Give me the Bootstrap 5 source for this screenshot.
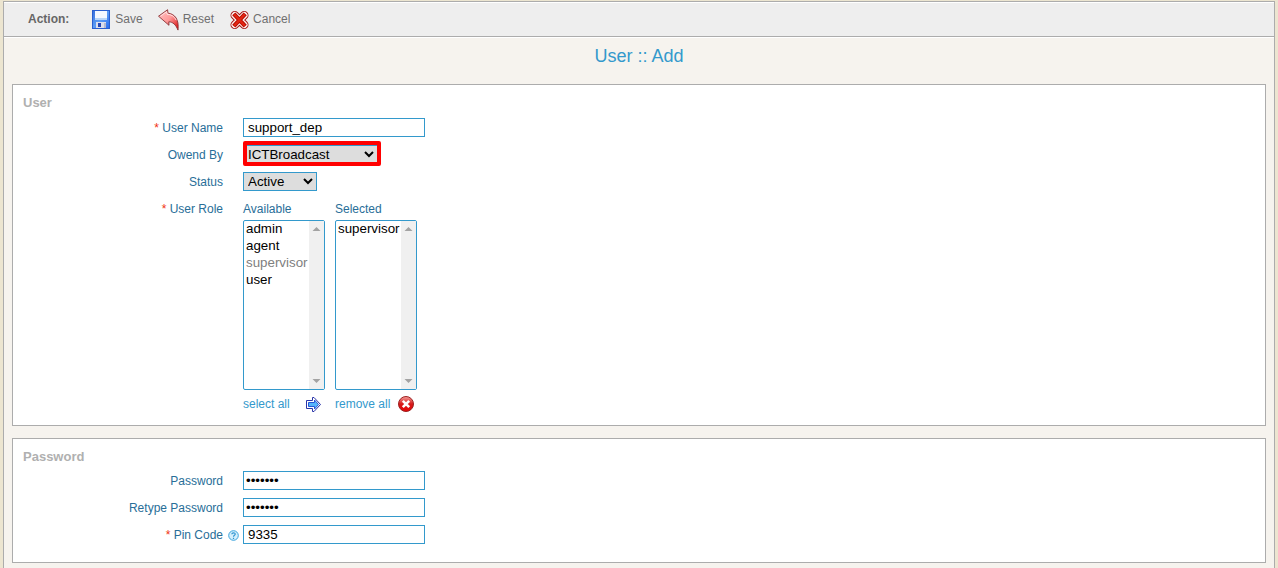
<!DOCTYPE html>
<html lang="en">
<head>
<meta charset="utf-8">
<meta name="viewport" content="width=device-width, initial-scale=1">
<title>User :: Add</title>
<link href="https://cdn.jsdelivr.net/npm/bootstrap@5.3.0/dist/css/bootstrap.min.css" rel="stylesheet">
<style>
body { font-family: "Liberation Sans", Arial, sans-serif; font-size: 12px; line-height: 15px; background: #ece5d0; color: #666; }
.page-frame { margin: 1px 3px 0; background: #f6f3ee; border: 1px solid #acacac; border-bottom: 0; min-height: calc(100vh - 1px); }
.toolbar { height: 35px; padding-left: 24px; gap: 16px; background: #eee; border-top: 1px solid #fff; border-bottom: 1px solid #acacac; }
.toolbar strong { color: #666; margin-right: 7px; }
.tool { border: 0; padding: 0; gap: 4px; background: none; color: #707070; }
.page-title { font-size: 18px; line-height: 36px; font-weight: 400; color: #3399cc; border-top: 1px solid #fff; margin: 0 0 10px; }
.panel { background: #fff; border: 1px solid #acacac; margin: 0 8px 12px; padding: 10px 0 7px; }
.panel h2 { font-size: 13px; line-height: 16px; font-weight: 700; color: #b0b0b0; margin: 0 10px 7px; }
.panel.credentials { padding-bottom: 10px; }
.credentials h2 { margin-bottom: 6px; }
.line { min-height: 19px; margin-bottom: 8px; }
.caption { width: 210px; text-align: right; color: #286e98; line-height: 19px; padding-top: 1px; margin-bottom: -1px; }
.caption b { color: #f03010; font-weight: 400; }
.hint { width: 20px; padding: 2px 0 0 5px; }
.hint svg { display: block; }
.field { font-size: revert; line-height: 15px; height: 19px; width: 182px; padding: 1px 4px; border: 1px solid #3399cc; border-radius: 0; background: #fff; color: #000; }
.field:focus { outline: 0; }
.secret { padding-left: 2px; }
.picker { padding: 0; background: #ddd; }
.owner { width: 135px; }
.status { width: 74px; }
.marked { position: relative; }
.marked::after { content: ""; position: absolute; inset: -4px -3px -2px 0; border: 4px solid #f00; border-radius: 2px; pointer-events: none; }
.role { width: 82px; margin-right: 10px; }
.role label { color: #286e98; line-height: 19px; padding-top: 1px; margin-bottom: 1px; }
.roles { font-size: revert; line-height: 16px; display: block; width: 82px; height: 170px; padding: 0; border: 1px solid #3399cc; border-radius: 2px; overflow-y: scroll; scrollbar-width: none; background: #fff; color: #000; }
.roles::-webkit-scrollbar { display: none; }
.roles option { padding: 0 2px 1px; min-height: 17px; }
.list-frame { position: relative; }
.list-bar { position: absolute; top: 1px; right: 1px; bottom: 1px; width: 15px; background: #f0f0f0; pointer-events: none; }
.role a { color: #3399cc; text-decoration: none; }
.role-foot { height: 28px; }
</style>
</head>
<body>
<main class="page-frame">
  <div class="toolbar d-flex align-items-center">
    <strong>Action:</strong>
    <button type="button" class="tool d-flex align-items-center">
      <svg width="19" height="19" viewBox="0 0 19 19">
        <defs><linearGradient id="disk" x2="1" y2="1"><stop stop-color="#3a72dd"/><stop offset=".5" stop-color="#5b9cf5"/><stop offset="1" stop-color="#2a6cf0"/></linearGradient></defs>
        <path d="M0 0h18v19H0z" fill="#2a5fd0"/><path d="M1 1h16v17H1z" fill="url(#disk)"/>
        <path d="M3 1h12v8H3z" fill="#f4f8ff"/><path d="M3 8h12v2H3z" fill="#b8d5f8"/>
        <path d="M4 12h10v6H4z" fill="#dcdeec"/><path d="M6 13h3v4H6z" fill="#2646b5"/><path d="M12 13h2v5h-2z" fill="#b4b8d0"/>
      </svg>Save
    </button>
    <button type="button" class="tool d-flex align-items-center">
      <svg width="20" height="22" viewBox="0 0 20 22" overflow="visible">
        <defs><linearGradient id="back" x2="1" y2="1"><stop stop-color="#ffc8c8"/><stop offset=".5" stop-color="#f99"/><stop offset="1" stop-color="#d40000"/></linearGradient></defs>
        <path d="M-.5 7.200 8.600.7l.3 3.400c7 .8 11.400 6.500 10.100 17-2.300-5.500-5-8.100-9.200-8.300l.2 3.500z" fill="url(#back)" stroke="#8b3236" stroke-width=".9"/>
        <path d="M1.500 7.200 7.600 2.700l.4 2.500c4.500.3 7.500 2.300 9.200 6" fill="none" stroke="#ffe1e1"/>
      </svg>Reset
    </button>
    <button type="button" class="tool d-flex align-items-center">
      <svg width="19" height="20" viewBox="0 0 20 20">
        <path d="M5 5 15 15M15 5 5 15" stroke="#a51414" stroke-width="9" stroke-linecap="round"/>
        <path d="M5 5 15 15M15 5 5 15" stroke="#fff0ed" stroke-width="7" stroke-linecap="round"/>
        <path d="M4 3.500 16 16.500M16 3.500 4 16.500" stroke="#b20b00" stroke-width="4.500"/>
        <path d="M4.500 4 15.500 16M15.500 4 4.500 16" stroke="#e32412" stroke-width="2.500"/>
      </svg>Cancel
    </button>
  </div>
  <h1 class="page-title text-center">User :: Add</h1>
  <form>
    <section class="panel">
      <h2>User</h2>
      <div class="line d-flex"><label class="caption" for="name"><b>*</b> User Name</label><span class="hint"></span><input class="field" id="name" type="text" value="support_dep"></div>
      <div class="line d-flex"><label class="caption" for="owner">Owend By</label><span class="hint"></span><span class="marked d-flex"><select class="field picker owner" id="owner"><option>ICTBroadcast</option></select></span></div>
      <div class="line d-flex"><label class="caption" for="status">Status</label><span class="hint"></span><select class="field picker status" id="status"><option>Active</option></select></div>
      <div class="d-flex"><span class="caption"><b>*</b> User Role</span><span class="hint"></span>
        <div class="role"><label class="d-block" for="available">Available</label>
          <div class="list-frame">
            <select class="roles" id="available" multiple><option>admin</option><option>agent</option><option disabled>supervisor</option><option>user</option></select>
            <span class="list-bar d-flex flex-column justify-content-between"><svg width="15" height="15"><path d="M3.500 10h8l-4-4z" fill="#a3a3a3"/></svg><svg width="15" height="15"><path d="M3.500 5h8l-4 4z" fill="#a3a3a3"/></svg></span>
          </div>
          <div class="role-foot d-flex align-items-center justify-content-between pe-1"><a href="#">select all</a>
            <a href="#" aria-label="Add"><svg class="d-block" width="15" height="15" viewBox="0 0 15 15"><path d="M.5 3.500h6V.5H8l6.500 7-6.500 7H6.500v-3h-6z" fill="#fff" stroke="#2a35a8"/><path d="M2.500 5.500h6v-2.500l4 4.500-4 4.500V9.500h-6z" fill="#55b4fb" stroke="#2456d6"/></svg></a>
          </div>
        </div>
        <div class="role"><label class="d-block" for="selected">Selected</label>
          <div class="list-frame">
            <select class="roles" id="selected" multiple><option>supervisor</option></select>
            <span class="list-bar d-flex flex-column justify-content-between"><svg width="15" height="15"><path d="M3.500 10h8l-4-4z" fill="#a3a3a3"/></svg><svg width="15" height="15"><path d="M3.500 5h8l-4 4z" fill="#a3a3a3"/></svg></span>
          </div>
          <div class="role-foot d-flex align-items-center gap-2"><a class="text-nowrap" href="#">remove all</a>
            <a href="#" aria-label="Remove"><svg class="d-block" width="16" height="16" viewBox="0 0 16 16"><defs><linearGradient id="ball" x2="0" y2="1"><stop stop-color="#f5a09c"/><stop offset=".5" stop-color="#d61a1a"/><stop offset="1" stop-color="#e80505"/></linearGradient></defs><circle cx="8" cy="8" r="7.500" fill="url(#ball)" stroke="#9c2222"/><path d="m4.800 4.800 6.400 6.400m0-6.400-6.400 6.400" stroke="#fff" stroke-width="2.600"/></svg></a>
          </div>
        </div>
      </div>
    </section>
    <section class="panel credentials">
      <h2>Password</h2>
      <div class="line d-flex"><label class="caption" for="pass">Password</label><span class="hint"></span><input class="field secret" id="pass" type="password" value="support"></div>
      <div class="line d-flex"><label class="caption" for="again">Retype Password</label><span class="hint"></span><input class="field secret" id="again" type="password" value="support"></div>
      <div class="line d-flex"><label class="caption" for="pin"><b>*</b> Pin Code</label><span class="hint d-flex align-items-center"><svg width="11" height="11" viewBox="0 0 11 11"><circle cx="5.500" cy="5.500" r="4.800" fill="#d5effc" stroke="#3ba3dc"/><path d="M3.800 4.300C3.900 2.300 7.300 2.300 7.200 4.200 7.100 5.300 5.500 5.300 5.500 6.800M5.500 7.800v1.200" fill="none" stroke="#2f94d0" stroke-width="1.200"/></svg></span><input class="field" id="pin" type="text" value="9335"></div>
    </section>
  </form>
</main>
<script src="https://cdn.jsdelivr.net/npm/bootstrap@5.3.0/dist/js/bootstrap.bundle.min.js"></script>
</body>
</html>
